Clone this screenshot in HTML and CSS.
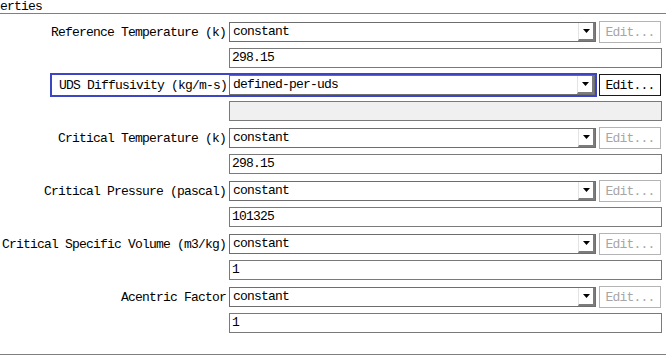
FILE: index.html
```html
<!DOCTYPE html>
<html>
<head>
<meta charset="utf-8">
<link rel="stylesheet" href="styles.css">
</head>
<body>
<div class="panel">
  <div class="group-title"><span class="title-text">erties</span></div>
  <div class="props">
    <div class="prop">
      <div class="row">
        <label class="lbl">Reference Temperature (k)</label>
        <div class="combo"><span class="combo-text">constant</span><span class="combo-btn"><svg width="7" height="4" viewBox="0 0 7 4"><polygon points="0,0 7,0 3.5,4" fill="#000"/></svg></span></div>
        <button class="edit" disabled>Edit...</button>
      </div>
      <div class="field">298.15</div>
    </div>
    <div class="prop">
      <div class="row">
        <div class="focus">
          <label class="lbl-f">UDS Diffusivity (kg/m-s)</label>
          <div class="combo combo-f"><span class="combo-text">defined-per-uds</span><span class="combo-btn"><svg width="7" height="4" viewBox="0 0 7 4"><polygon points="0,0 7,0 3.5,4" fill="#000"/></svg></span></div>
        </div>
        <button class="edit edit-on">Edit...</button>
      </div>
      <div class="field field-off"></div>
    </div>
    <div class="prop">
      <div class="row">
        <label class="lbl">Critical Temperature (k)</label>
        <div class="combo"><span class="combo-text">constant</span><span class="combo-btn"><svg width="7" height="4" viewBox="0 0 7 4"><polygon points="0,0 7,0 3.5,4" fill="#000"/></svg></span></div>
        <button class="edit" disabled>Edit...</button>
      </div>
      <div class="field">298.15</div>
    </div>
    <div class="prop">
      <div class="row">
        <label class="lbl">Critical Pressure (pascal)</label>
        <div class="combo"><span class="combo-text">constant</span><span class="combo-btn"><svg width="7" height="4" viewBox="0 0 7 4"><polygon points="0,0 7,0 3.5,4" fill="#000"/></svg></span></div>
        <button class="edit" disabled>Edit...</button>
      </div>
      <div class="field">101325</div>
    </div>
    <div class="prop">
      <div class="row">
        <label class="lbl">Critical Specific Volume (m3/kg)</label>
        <div class="combo"><span class="combo-text">constant</span><span class="combo-btn"><svg width="7" height="4" viewBox="0 0 7 4"><polygon points="0,0 7,0 3.5,4" fill="#000"/></svg></span></div>
        <button class="edit" disabled>Edit...</button>
      </div>
      <div class="field">1</div>
    </div>
    <div class="prop">
      <div class="row">
        <label class="lbl">Acentric Factor</label>
        <div class="combo"><span class="combo-text">constant</span><span class="combo-btn"><svg width="7" height="4" viewBox="0 0 7 4"><polygon points="0,0 7,0 3.5,4" fill="#000"/></svg></span></div>
        <button class="edit" disabled>Edit...</button>
      </div>
      <div class="field">1</div>
    </div>
  </div>
  <div class="bottom-line"></div>
</div>
</body>
</html>
```

FILE: styles.css
```css
html, body {
  margin: 0;
  padding: 0;
  background: #fff;
  overflow: hidden;
}
body {
  font-family: "Liberation Mono", "DejaVu Sans Mono", monospace;
  font-size: 13px;
  letter-spacing: -0.8px;
  color: #000;
  width: 666px;
  height: 357px;
}
.panel {
  width: 666px;
}
.group-title {
  height: 13px;
  border-bottom: 1px solid #808080;
  overflow: hidden;
  line-height: 13px;
}
.title-text {
  display: block;
  white-space: nowrap;
}
.props {
  padding-top: 6px;
  padding-bottom: 16px;
}
.row {
  display: flex;
  align-items: center;
  height: 24px;
}
.lbl {
  width: 226px;
  margin-right: 3px;
  text-align: right;
  white-space: nowrap;
  flex: none;
}
.combo {
  width: 367px;
  height: 20px;
  box-sizing: border-box;
  border: 1px solid #6e6e6e;
  background: #fff;
  display: flex;
  align-items: stretch;
  flex: none;
}
.combo-text {
  flex: 1;
  padding-left: 3px;
  line-height: 18px;
  white-space: nowrap;
}
.combo-btn {
  width: 17px;
  flex: none;
  box-sizing: border-box;
  background: #fff;
  border-left: 1px solid #e3e3e3;
  border-right: 2px solid #7c7c7c;
  border-bottom: 2px solid #7c7c7c;
  display: flex;
  align-items: center;
  justify-content: center;
}
.combo-btn svg {
  display: block;
}
.edit {
  margin-left: 3px;
  width: 62px;
  height: 22px;
  box-sizing: border-box;
  padding: 0;
  font: inherit;
  letter-spacing: inherit;
  background: #fff;
  border: 1px solid #b4b4b4;
  color: #a6a6a6;
  text-align: center;
}
.edit-on {
  margin-left: 2px;
  border-color: #1a1a1a;
  color: #000;
}
.focus {
  margin-left: 50px;
  width: 547px;
  height: 24px;
  box-sizing: border-box;
  border: 2px solid #3c46c4;
  padding-left: 7px;
  display: flex;
  align-items: center;
  flex: none;
}
.lbl-f {
  flex: 1;
  white-space: nowrap;
}
.combo-f {
  width: 366px;
}
.field {
  margin: 4px 0 5px 229px;
  width: 433px;
  height: 20px;
  box-sizing: border-box;
  border: 1px solid #7a7a7a;
  padding-left: 2px;
  line-height: 18px;
  background: #fff;
  white-space: nowrap;
}
.field-off {
  background: #f0f0f0;
}
.bottom-line {
  border-top: 1px solid #808080;
}
```
